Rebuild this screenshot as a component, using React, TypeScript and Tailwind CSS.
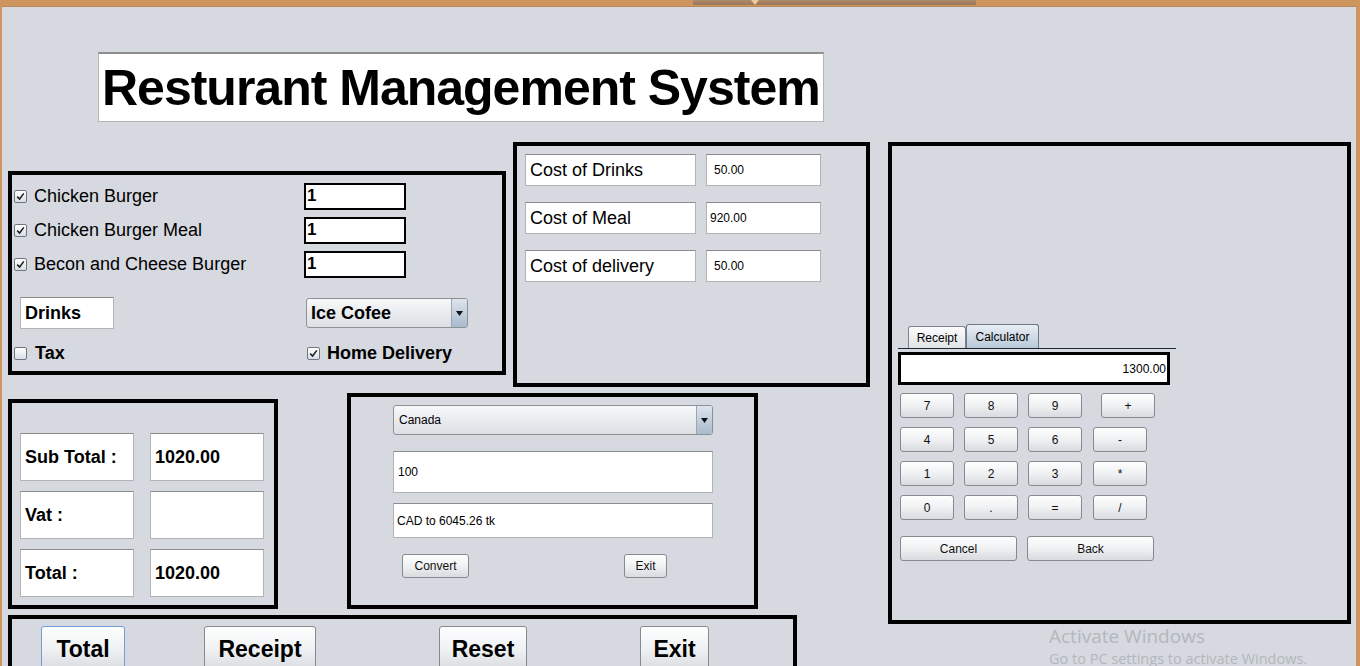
import React from 'react'

function Check({ checked = false }: { checked?: boolean }) {
  return (
    <span className="w-[13px] h-[13px] shrink-0 rounded-[2px] border border-[#6d7783] bg-linear-to-b from-[#ffffff] to-[#d9dee4] flex items-center justify-center">
      {checked && (
        <svg width="9" height="9" viewBox="0 0 9 9">
          <path d="M1.2 4.6 L3.6 7 L7.8 1.4" stroke="#1c1c1c" strokeWidth="1.5" fill="none" />
        </svg>
      )}
    </span>
  )
}

function Field({ className = '', children }: { className?: string; children?: React.ReactNode }) {
  return (
    <div className={`bg-white border border-[#b3b3b3] border-t-[#8c8c8c] flex items-center ${className}`}>
      {children}
    </div>
  )
}

function Combo({ className = '', children }: { className?: string; children?: React.ReactNode }) {
  return (
    <div className={`flex rounded-[3px] border border-[#8d9094] bg-linear-to-b from-[#f7f8f9] to-[#dcdfe4] overflow-hidden ${className}`}>
      <div className="flex-1 flex items-center">{children}</div>
      <div className="w-[16px] border-l border-[#9aa6b2] bg-linear-to-b from-[#dde5ee] to-[#a9bacb] flex items-center justify-center">
        <svg width="7" height="5" viewBox="0 0 7 5">
          <path d="M0 0 L7 0 L3.5 5 Z" fill="#111" />
        </svg>
      </div>
    </div>
  )
}

function Btn({ className = '', children }: { className?: string; children?: React.ReactNode }) {
  return (
    <div className={`rounded-[3px] border border-[#868a8f] bg-linear-to-b from-[#fefefe] via-[#eff1f3] to-[#d8dbdf] flex items-center justify-center text-[12px] text-[#111] ${className}`}>
      {children}
    </div>
  )
}

export default function App() {
  const calcRows = [
    ['7', '8', '9', '+'],
    ['4', '5', '6', '-'],
    ['1', '2', '3', '*'],
    ['0', '.', '=', '/'],
  ]

  return (
    <div className="relative w-[1360px] h-[666px] overflow-hidden flex flex-col bg-[#cf955e] font-['Liberation_Sans',Arial,sans-serif] text-black">
      {/* window title strip */}
      <div className="h-[6px] shrink-0 flex">
        <div className="ml-[693px] w-[283px] h-[5px] bg-linear-to-b from-[#b08a69] to-[#98785c] flex">
          <div className="ml-[58px] w-0 h-0 border-l-[4px] border-r-[4px] border-t-[5px] border-l-transparent border-r-transparent border-t-[#f0c9a0]" />
        </div>
      </div>

      <div className="flex-1 flex">
        <div className="w-[2px] bg-[#cf955e]" />
        <div className="flex-1 bg-[#d6d9df] border-t border-[#b9885c] overflow-hidden">
          {/* title */}
          <div className="mt-[45px] ml-[96px] w-[726px] h-[70px] bg-white border border-[#b5b5b5] border-t-2 border-t-[#8e8e8e] flex items-center">
            <span className="pl-[3px] text-[50px] font-bold tracking-[-1px] leading-none">Resturant Management System</span>
          </div>

          <div className="mt-[20px] flex items-start">
            {/* left block */}
            <div className="ml-[6px] w-[862px] flex flex-col">
              <div className="flex items-start">
                {/* order panel */}
                <div className="mt-[29px] w-[498px] h-[204px] border-4 border-black pt-[4px]">
                  {[
                    'Chicken Burger',
                    'Chicken Burger Meal',
                    'Becon and Cheese Burger',
                  ].map((item) => (
                    <div key={item} className="h-[34px] flex items-center">
                      <div className="w-[292px] pl-[2px] flex items-center gap-[7px]">
                        <Check checked />
                        <span className="text-[18px]">{item}</span>
                      </div>
                      <div className="w-[102px] h-[27px] bg-white border-2 border-black flex items-center pl-[1px] text-[17px] font-bold">
                        1
                      </div>
                    </div>
                  ))}
                  <div className="mt-[16px] h-[32px] flex items-center">
                    <div className="w-[294px] pl-[8px]">
                      <Field className="w-[94px] h-[32px] pl-[4px] text-[18px] font-bold">Drinks</Field>
                    </div>
                    <Combo className="w-[162px] h-[30px]">
                      <span className="pl-[4px] text-[18px] font-bold">Ice Cofee</span>
                    </Combo>
                  </div>
                  <div className="mt-[14px] h-[20px] flex items-center">
                    <div className="w-[295px] pl-[2px] flex items-center gap-[8px]">
                      <Check />
                      <span className="text-[18px] font-bold">Tax</span>
                    </div>
                    <div className="flex items-center gap-[7px]">
                      <Check checked />
                      <span className="text-[18px] font-bold">Home Delivery</span>
                    </div>
                  </div>
                </div>

                {/* cost panel */}
                <div className="ml-[7px] w-[357px] h-[245px] border-4 border-black pt-[8px] pl-[8px] flex flex-col gap-[16px]">
                  {[
                    ['Cost of Drinks', '50.00', 'pl-[7px]'],
                    ['Cost of Meal', '920.00', 'pl-[3px]'],
                    ['Cost of delivery', '50.00', 'pl-[7px]'],
                  ].map(([label, value, pad]) => (
                    <div key={label} className="flex gap-[10px]">
                      <Field className="w-[171px] h-[32px] pl-[4px] text-[18px]">{label}</Field>
                      <Field className={`w-[115px] h-[32px] text-[12px] ${pad}`}>{value}</Field>
                    </div>
                  ))}
                </div>
              </div>

              <div className="mt-[6px] flex items-start">
                {/* totals panel */}
                <div className="mt-[6px] w-[270px] h-[210px] border-4 border-black pt-[30px] pl-[8px] flex flex-col gap-[10px]">
                  {[
                    ['Sub Total :', '1020.00'],
                    ['Vat :', ''],
                    ['Total :', '1020.00'],
                  ].map(([label, value]) => (
                    <div key={label} className="flex gap-[16px]">
                      <Field className="w-[114px] h-[48px] pl-[4px] text-[18px] font-bold">{label}</Field>
                      <Field className="w-[114px] h-[48px] pl-[4px] text-[18px] font-bold">{value}</Field>
                    </div>
                  ))}
                </div>

                {/* currency panel */}
                <div className="ml-[69px] w-[411px] h-[216px] border-4 border-black pt-[8px] pl-[42px] flex flex-col">
                  <Combo className="w-[320px] h-[30px]">
                    <span className="pl-[5px] text-[12px]">Canada</span>
                  </Combo>
                  <Field className="mt-[16px] w-[320px] h-[42px] pl-[4px] text-[12px]">100</Field>
                  <Field className="mt-[10px] w-[320px] h-[35px] pl-[3px] text-[12px]">CAD to 6045.26 tk</Field>
                  <div className="mt-[16px] flex">
                    <Btn className="ml-[9px] w-[67px] h-[24px]">Convert</Btn>
                    <Btn className="ml-[155px] w-[43px] h-[24px]">Exit</Btn>
                  </div>
                </div>
              </div>

              {/* action buttons */}
              <div className="mt-[6px] w-[789px] h-[60px] border-4 border-b-0 border-black pt-[7px] pl-[29px] flex items-start">
                <Btn className="w-[84px] h-[46px] !border-[#6f9fd6] text-[23px] font-bold !text-black">Total</Btn>
                <Btn className="ml-[79px] w-[112px] h-[46px] text-[23px] font-bold !text-black">Receipt</Btn>
                <Btn className="ml-[123px] w-[88px] h-[46px] text-[23px] font-bold !text-black">Reset</Btn>
                <Btn className="ml-[113px] w-[69px] h-[46px] text-[23px] font-bold !text-black">Exit</Btn>
              </div>
            </div>

            {/* calculator panel */}
            <div className="ml-[18px] w-[463px] h-[482px] border-4 border-black pt-[179px] flex flex-col">
              <div className="ml-[6px] w-[278px] h-[24px] border-b border-[#1f2a35] pl-[10px] flex items-end">
                <div className="w-[58px] h-[22px] rounded-t-[3px] border border-b-0 border-[#7c858e] bg-linear-to-b from-[#fbfbfc] to-[#e1e4e8] flex items-center justify-center text-[12px]">
                  Receipt
                </div>
                <div className="w-[73px] h-[24px] rounded-t-[3px] border border-b-0 border-[#6c7a88] bg-linear-to-b from-[#e9eef4] to-[#b9c9d9] flex items-center justify-center text-[12px]">
                  Calculator
                </div>
              </div>
              <div className="mt-[3px] ml-[6px] w-[272px] h-[33px] bg-white border-[3px] border-black flex items-center justify-end pr-[1px] text-[12px]">
                1300.00
              </div>
              <div className="mt-[8px] ml-[8px] flex flex-col gap-[9px]">
                {calcRows.map((row, r) => (
                  <div key={r} className="flex">
                    {row.map((k, i) => (
                      <Btn
                        key={k}
                        className={`w-[54px] h-[25px] ${i === 0 ? '' : i < 3 ? 'ml-[10px]' : r === 0 ? 'ml-[19px]' : 'ml-[11px]'}`}
                      >
                        {k}
                      </Btn>
                    ))}
                  </div>
                ))}
                <div className="mt-[7px] flex gap-[10px]">
                  <Btn className="w-[117px] h-[25px]">Cancel</Btn>
                  <Btn className="w-[127px] h-[25px]">Back</Btn>
                </div>
              </div>
            </div>
          </div>
        </div>
        <div className="w-[4px] bg-[#cf955e]" />
      </div>

      {/* OS watermark */}
      <div className="absolute left-[1049px] top-[627px] text-[#b3b7bd] font-['Open_Sans',sans-serif] leading-none whitespace-nowrap">
        <div className="text-[19px]">Activate Windows</div>
        <div className="mt-[6px] text-[14.5px]">Go to PC settings to activate Windows.</div>
      </div>
    </div>
  )
}
